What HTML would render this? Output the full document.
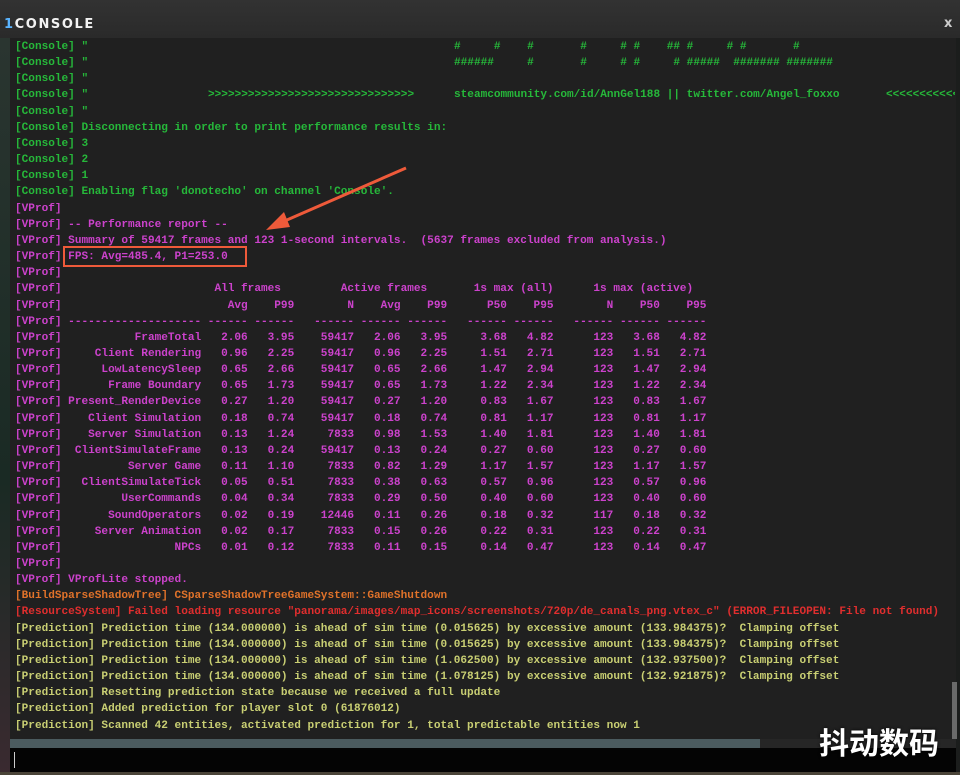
<!DOCTYPE html>
<html><head><meta charset="utf-8"><style>
*{margin:0;padding:0;box-sizing:border-box}
html,body{width:960px;height:775px;overflow:hidden;background:#1b1d1c}
.title{position:absolute;left:0;top:0;width:960px;height:38px;background:linear-gradient(#323232,#2a2a2a)}
.title .t{position:absolute;left:4px;top:17px;font:bold 13px "DejaVu Sans",sans-serif;letter-spacing:1.6px;color:#f2f2f2}
.title .t b{color:#5ab4ff}
.title .x{position:absolute;left:944px;top:16px;font:bold 13px "DejaVu Sans",sans-serif;color:#ccc}
.left{position:absolute;left:0;top:38px;width:10px;height:737px;background:linear-gradient(#2a3530,#1a2a24 60%,#3a2a30)}
.panel{position:absolute;left:10px;top:38px;width:946px;height:701px;background:#202020}
.hs{position:absolute;left:10px;top:739px;width:750px;height:9px;background:#4b5b5f}
.hs2{position:absolute;left:760px;top:739px;width:196px;height:9px;background:#262626}
.vs{position:absolute;left:952px;top:682px;width:5px;height:57px;background:#6a6a6a}
.inp{position:absolute;left:10px;top:748px;width:946px;height:24px;background:#040404}
.cur{position:absolute;left:14px;top:752px;width:1px;height:16px;background:#ccc}
.bot{position:absolute;left:0;top:772px;width:960px;height:3px;background:#4a4438}
.txt{position:absolute;left:15px;top:39px;width:940px;height:700px;overflow:hidden;font-family:"Liberation Mono",monospace;font-size:11.08px;line-height:16.17px;white-space:normal;font-weight:bold}
.txt div{height:16.17px;position:relative;white-space:pre}
.g{color:#26b83a}.m{color:#cc42cc}.o{color:#e0722a}.r{color:#e02e2e}.y{color:#c9cf73}
.a{position:absolute;top:0}
.box{position:absolute;left:63px;top:246px;width:184px;height:21px;border:2px solid #ee5a3a}
.wm{position:absolute;left:819px;top:719px;font:bold 30px "Noto Sans CJK SC",sans-serif;color:#fff;text-shadow:0 0 3px #000}
</style></head><body>
<div class="title"><div class="t"><b>1</b>CONSOLE</div><div class="x">x</div></div>
<div class="left"></div>
<div class="panel"></div>
<div class="txt"><div class="g">[Console] "<span class="a" style="left:439px">#     #    #       #     # #    ## #     # #       #</span></div><div class="g">[Console] "<span class="a" style="left:439px">######     #       #     # #     # #####  ####### #######</span></div><div class="g">[Console] "</div><div class="g">[Console] "<span class="a" style="left:193px">&gt;&gt;&gt;&gt;&gt;&gt;&gt;&gt;&gt;&gt;&gt;&gt;&gt;&gt;&gt;&gt;&gt;&gt;&gt;&gt;&gt;&gt;&gt;&gt;&gt;&gt;&gt;&gt;&gt;&gt;&gt;</span><span class="a" style="left:439px">steamcommunity.com/id/AnnGel188 || twitter.com/Angel_foxxo</span><span class="a" style="left:871px">&lt;&lt;&lt;&lt;&lt;&lt;&lt;&lt;&lt;&lt;&lt;&lt;</span></div><div class="g">[Console] "</div><div class="g">[Console] Disconnecting in order to print performance results in:</div><div class="g">[Console] 3</div><div class="g">[Console] 2</div><div class="g">[Console] 1</div><div class="g">[Console] Enabling flag 'donotecho' on channel 'Console'.</div><div class="m">[VProf]</div><div class="m">[VProf] -- Performance report --</div><div class="m">[VProf] Summary of 59417 frames and 123 1-second intervals.  (5637 frames excluded from analysis.)</div><div class="m">[VProf] FPS: Avg=485.4, P1=253.0</div><div class="m">[VProf]</div><div class="m">[VProf]                       All frames         Active frames       1s max (all)      1s max (active)</div><div class="m">[VProf]                         Avg    P99        N    Avg    P99      P50    P95        N    P50    P95</div><div class="m">[VProf] -------------------- ------ ------   ------ ------ ------   ------ ------   ------ ------ ------</div><div class="m">[VProf]           FrameTotal   2.06   3.95    59417   2.06   3.95     3.68   4.82      123   3.68   4.82</div><div class="m">[VProf]     Client Rendering   0.96   2.25    59417   0.96   2.25     1.51   2.71      123   1.51   2.71</div><div class="m">[VProf]      LowLatencySleep   0.65   2.66    59417   0.65   2.66     1.47   2.94      123   1.47   2.94</div><div class="m">[VProf]       Frame Boundary   0.65   1.73    59417   0.65   1.73     1.22   2.34      123   1.22   2.34</div><div class="m">[VProf] Present_RenderDevice   0.27   1.20    59417   0.27   1.20     0.83   1.67      123   0.83   1.67</div><div class="m">[VProf]    Client Simulation   0.18   0.74    59417   0.18   0.74     0.81   1.17      123   0.81   1.17</div><div class="m">[VProf]    Server Simulation   0.13   1.24     7833   0.98   1.53     1.40   1.81      123   1.40   1.81</div><div class="m">[VProf]  ClientSimulateFrame   0.13   0.24    59417   0.13   0.24     0.27   0.60      123   0.27   0.60</div><div class="m">[VProf]          Server Game   0.11   1.10     7833   0.82   1.29     1.17   1.57      123   1.17   1.57</div><div class="m">[VProf]   ClientSimulateTick   0.05   0.51     7833   0.38   0.63     0.57   0.96      123   0.57   0.96</div><div class="m">[VProf]         UserCommands   0.04   0.34     7833   0.29   0.50     0.40   0.60      123   0.40   0.60</div><div class="m">[VProf]       SoundOperators   0.02   0.19    12446   0.11   0.26     0.18   0.32      117   0.18   0.32</div><div class="m">[VProf]     Server Animation   0.02   0.17     7833   0.15   0.26     0.22   0.31      123   0.22   0.31</div><div class="m">[VProf]                 NPCs   0.01   0.12     7833   0.11   0.15     0.14   0.47      123   0.14   0.47</div><div class="m">[VProf]</div><div class="m">[VProf] VProfLite stopped.</div><div class="o">[BuildSparseShadowTree] CSparseShadowTreeGameSystem::GameShutdown</div><div class="r">[ResourceSystem] Failed loading resource "panorama/images/map_icons/screenshots/720p/de_canals_png.vtex_c" (ERROR_FILEOPEN: File not found)</div><div class="y">[Prediction] Prediction time (134.000000) is ahead of sim time (0.015625) by excessive amount (133.984375)?  Clamping offset</div><div class="y">[Prediction] Prediction time (134.000000) is ahead of sim time (0.015625) by excessive amount (133.984375)?  Clamping offset</div><div class="y">[Prediction] Prediction time (134.000000) is ahead of sim time (1.062500) by excessive amount (132.937500)?  Clamping offset</div><div class="y">[Prediction] Prediction time (134.000000) is ahead of sim time (1.078125) by excessive amount (132.921875)?  Clamping offset</div><div class="y">[Prediction] Resetting prediction state because we received a full update</div><div class="y">[Prediction] Added prediction for player slot 0 (61876012)</div><div class="y">[Prediction] Scanned 42 entities, activated prediction for 1, total predictable entities now 1</div></div>
<div class="box"></div>
<svg style="position:absolute;left:0;top:0" width="960" height="775"><line x1="406" y1="168" x2="280" y2="223" stroke="#ee5a3a" stroke-width="3"/><polygon points="266,230 284,212 290,227" fill="#ee5a3a"/></svg>
<div class="hs"></div><div class="hs2"></div><div class="vs"></div>
<div class="inp"></div><div class="cur"></div>
<div class="bot"></div>
<div class="wm">抖动数码</div>
</body></html>
